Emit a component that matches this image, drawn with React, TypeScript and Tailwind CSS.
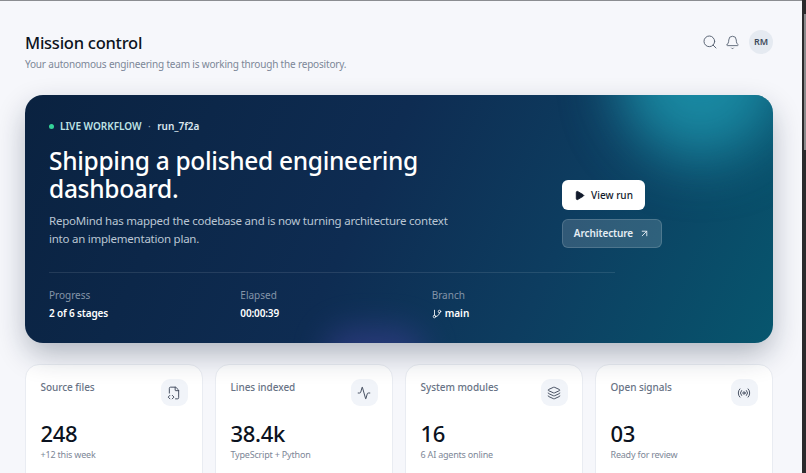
import { Search, Bell, Play, ArrowUpRight, GitBranch, FileCode2, Activity, Layers, Radio } from "lucide-react"

const font = "font-['Noto_Sans',sans-serif]"

const stats = [
  { label: "Source files", value: "248", note: "+12 this week", icon: FileCode2 },
  { label: "Lines indexed", value: "38.4k", note: "TypeScript + Python", icon: Activity },
  { label: "System modules", value: "16", note: "6 AI agents online", icon: Layers },
  { label: "Open signals", value: "03", note: "Ready for review", icon: Radio },
]

function StatCard({ label, value, note, icon: Icon }: (typeof stats)[number]) {
  return (
    <div className="h-[130px] rounded-[14px] border border-[#e9ecf2] bg-white px-[14.5px] pt-[14px]">
      <div className="flex items-start justify-between">
        <span className="mt-px text-[10px] font-medium leading-[15px] tracking-[-0.05px] text-[#687385]">{label}</span>
        <div className="flex h-[27px] w-[27px] items-center justify-center rounded-[9px] bg-[#f1f4f9] text-[#3c4658]">
          <Icon size={14} strokeWidth={1.6} />
        </div>
      </div>
      <div className="mt-[12px] text-[22px] font-medium leading-[30px] tracking-[-0.3px] text-[#0b1220]">{value}</div>
      <div className="text-[9px] leading-[14px] tracking-[-0.2px] text-[#7d8797]">{note}</div>
    </div>
  )
}

export default function App() {
  return (
    <div className={`flex h-[473px] w-[806px] overflow-hidden bg-[#f6f7fb] ${font}`}>
      <main className="w-[802px] shrink-0 border-t border-[#8b8d91] pl-[25px] pr-[29px]">
        <header className="flex h-[94px] items-start justify-between pt-[28px]">
          <div>
            <h1 className="text-[16.5px] font-medium leading-[28px] tracking-[-0.25px] text-[#0b1220]">Mission control</h1>
            <p className="text-[10px] leading-[15px] tracking-[-0.18px] text-[#7c8798]">
              Your autonomous engineering team is working through the repository.
            </p>
          </div>
          <div className="flex items-center pt-px text-[#5c6676]">
            <Search size={16} strokeWidth={1.5} />
            <Bell size={15} strokeWidth={1.5} className="ml-[7px]" />
            <div className="ml-[9px] flex h-6 w-6 items-center justify-center rounded-full bg-[#e5eaf1] text-[9px] font-semibold text-[#3f4a5c]">
              RM
            </div>
          </div>
        </header>

        <section className="relative h-[248px] overflow-hidden rounded-[18px] bg-[linear-gradient(115deg,#0a2240_0%,#0e2c52_45%,#0d3d60_70%,#07566e_100%)] pl-6 pt-[23px] shadow-[0_12px_30px_-2px_rgba(15,30,55,0.32)]">
          <div className="absolute right-[-10px] top-[-100px] h-[165px] w-[165px] rounded-full bg-[#1c95ad] opacity-85 blur-[30px]" />
          <div className="absolute bottom-[-40px] left-[300px] h-[55px] w-[100px] rounded-full bg-[#43409a] opacity-50 blur-[16px]" />

          <div className="relative flex">
            <div className="w-[513px]">
              <div className="flex items-center text-[10px] font-semibold leading-[16px] tracking-[-0.02px] text-[#bfe3e6]">
                <span className="mr-[6px] h-[5px] w-[5px] rounded-full bg-[#34d399]" />
                LIVE WORKFLOW
                <span className="mx-[6.5px] font-normal text-[#8fa3b8]">·</span>
                <span className="text-[#dbe7ef]">run_7f2a</span>
              </div>
              <h2 className="mt-[13px] w-[400px] text-[24.5px] font-medium leading-[28px] tracking-[-0.3px] text-white">
                Shipping a polished engineering dashboard.
              </h2>
              <p className="mt-[9px] w-[420px] text-[11.5px] leading-[18px] tracking-[-0.24px] text-[#bac6d4]">
                RepoMind has mapped the codebase and is now turning architecture context into an implementation plan.
              </p>
            </div>
            <div className="flex flex-col items-start pt-[62px]">
              <button className="flex h-[30px] w-[83px] items-center justify-center gap-[6px] rounded-[6px] bg-white text-[10px] font-medium text-[#111a2b]">
                <Play size={11} fill="currentColor" />
                View run
              </button>
              <button className="mt-[9px] flex h-[29px] w-[100px] items-center justify-center gap-[6px] rounded-[6px] border border-white/15 bg-white/15 text-[10px] font-semibold tracking-[-0.1px] text-[#e6eef5]">
                Architecture
                <ArrowUpRight size={11} />
              </button>
            </div>
          </div>

          <div className="relative mt-[24px] h-px w-[566px] bg-white/10" />
          <div className="relative mt-[15px] grid w-[574px] grid-cols-3">
            <div>
              <div className="text-[10px] leading-[15px] text-[#8494a8]">Progress</div>
              <div className="mt-[3px] text-[10px] font-semibold leading-[15px] tracking-[-0.15px] text-white">2 of 6 stages</div>
            </div>
            <div>
              <div className="text-[10px] leading-[15px] text-[#8494a8]">Elapsed</div>
              <div className="mt-[3px] text-[10px] font-semibold leading-[15px] tracking-[-0.15px] text-white">00:00:39</div>
            </div>
            <div>
              <div className="text-[10px] leading-[15px] text-[#8494a8]">Branch</div>
              <div className="mt-[3px] flex items-center gap-[3px] text-[10px] font-semibold leading-[15px] text-white">
                <GitBranch size={10} />
                main
              </div>
            </div>
          </div>
        </section>

        <div className="mt-[21px] grid grid-cols-4 gap-3">
          {stats.map((s) => (
            <StatCard key={s.label} {...s} />
          ))}
        </div>
      </main>
      <div className="flex-1 bg-[#2a2a2c] pl-[2px] pt-[14px]">
        <div className="h-[136px] bg-[#8a8a8c]" />
      </div>
    </div>
  )
}
